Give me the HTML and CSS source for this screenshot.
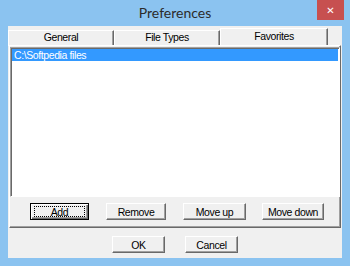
FILE: index.html
```html
<!DOCTYPE html>
<html lang="en">
<head>
    <meta charset="UTF-8">
    <meta name="viewport" content="width=device-width, initial-scale=1.0">
    <title>Preferences</title>
    <link rel="stylesheet" href="styles.css">
</head>
<body>
    <div class="window">
        <div class="titlebar">
            <span class="title">Preferences</span>
            <div class="close">&#x2715;</div>
        </div>

        <div class="client">
            <div class="tabs">
                <div class="tab">General</div>
                <div class="tab">File Types</div>
                <div class="tab active">Favorites</div>
            </div>

            <div class="panel">
                <div class="list">
                    <div class="item selected">C:\Softpedia files</div>
                </div>
                <div class="btn-row">
                    <button class="btn default w-add"><span class="focus">Add</span></button>
                    <button class="btn w-remove">Remove</button>
                    <button class="btn w-up">Move up</button>
                    <button class="btn w-down">Move down</button>
                </div>
            </div>

            <div class="footer">
                <button class="btn w-ok">OK</button>
                <button class="btn w-ok">Cancel</button>
            </div>
        </div>
    </div>
</body>
</html>
```

FILE: styles.css
```css
body {
    margin: 0;
    padding: 0;
    background-color: #8bc3f0;
}

.window {
    width: 350px;
    height: 266px;
    box-sizing: border-box;
    padding: 0 8px 8px 8px;
    background-color: #8bc3f0;
    font-family: "Liberation Sans", Arial, sans-serif;
    font-size: 10.5px;
    letter-spacing: -0.4px;
    color: #000;
}

.titlebar {
    position: relative;
    height: 26px;
    display: flex;
    align-items: center;
    justify-content: center;
}

.title {
    font-family: "Segoe UI", Lato, "Liberation Sans", sans-serif;
    font-size: 14px;
    letter-spacing: 0;
    color: #2b2b2b;
    margin-top: -1px;
}

.close {
    position: absolute;
    top: 0;
    right: -2px;
    width: 27px;
    height: 20px;
    background-color: #c75050;
    color: #fff;
    font-family: "DejaVu Sans", sans-serif;
    font-size: 10px;
    font-weight: bold;
    letter-spacing: 0;
    display: flex;
    align-items: center;
    justify-content: center;
}

.client {
    height: 232px;
    background-color: #f0f0f0;
    display: flex;
    flex-direction: column;
}

.tabs {
    display: flex;
    padding-top: 3px;
    height: 16px;
}

.tab {
    box-sizing: border-box;
    width: 106px;
    height: 16px;
    margin-top: 1px;
    border-top: 1px solid #fff;
    border-left: 1px solid #fff;
    border-right: 1px solid #696969;
    box-shadow: inset -1px 0 #a0a0a0;
    text-align: center;
    line-height: 13px;
}

.tab.active {
    width: 108px;
    height: 18px;
    margin-top: -1px;
    line-height: 14px;
}

.panel {
    box-sizing: border-box;
    margin-left: 1px;
    width: 332px;
    height: 183px;
    border-top: 1px solid #fff;
    border-left: 1px solid #fff;
    border-right: 1px solid #696969;
    border-bottom: 1px solid #696969;
    box-shadow: inset -1px -1px #a0a0a0;
    padding-top: 1px;
}

.list {
    box-sizing: border-box;
    width: 330px;
    height: 150px;
    background-color: #fff;
    border-top: 1px solid #a0a0a0;
    border-left: 1px solid #a0a0a0;
    border-right: 1px solid #fff;
    border-bottom: 1px solid #fff;
    box-shadow: inset 1px 1px #696969;
    padding: 1px 1px 0 1px;
}

.item {
    height: 12px;
    line-height: 12px;
    padding-left: 2px;
}

.item.selected {
    background-color: #3399ff;
    color: #fff;
}

.btn-row {
    display: flex;
    gap: 17px;
    padding-left: 20px;
    margin-top: 6px;
}

.btn {
    box-sizing: border-box;
    height: 17px;
    padding: 0;
    background-color: #f0f0f0;
    border-top: 1px solid #fff;
    border-left: 1px solid #fff;
    border-right: 1px solid #696969;
    border-bottom: 1px solid #696969;
    box-shadow: inset -1px -1px #a0a0a0;
    font-family: inherit;
    font-size: inherit;
    letter-spacing: inherit;
    color: #000;
    line-height: 14px;
}

.btn.default {
    border: 1px solid #000;
    box-shadow: inset 1px 1px #fff, inset -1px -1px #696969, inset -2px -2px #a0a0a0;
    padding: 2px 3px;
}

.focus {
    display: block;
    height: 100%;
    box-sizing: border-box;
    border: 1px dotted #000;
    line-height: 11px;
}

.w-add { width: 59px; }
.w-remove { width: 60px; }
.w-up { width: 63px; }
.w-down { width: 62px; margin-left: -1px; }
.w-ok { width: 53px; }

.footer {
    display: flex;
    justify-content: center;
    gap: 20px;
    padding-top: 8px;
}
```
